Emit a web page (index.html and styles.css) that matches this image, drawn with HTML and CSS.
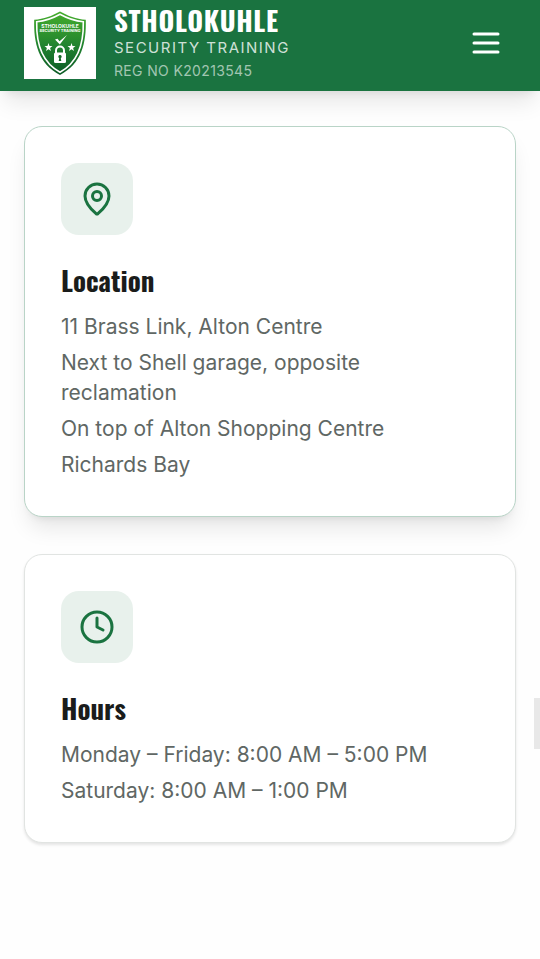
FILE: index.html
```html
<!DOCTYPE html>
<html lang="en">
<head>
  <meta charset="UTF-8" />
  <meta name="viewport" content="width=device-width, initial-scale=1.0"/>
  <title>Stholokuhle Security Training</title>
  <link rel="stylesheet" href="styles.css">
</head>
<body>

<header class="site-header">
  <a class="brand" href="#">
    <svg class="brand-logo" viewBox="0 0 72 72" aria-hidden="true">
      <defs>
        <linearGradient id="shield" x1="0" y1="0" x2="0" y2="1">
          <stop offset="0" stop-color="#45ad2c"/>
          <stop offset="0.55" stop-color="#20822f"/>
          <stop offset="1" stop-color="#0c5a26"/>
        </linearGradient>
      </defs>
      <rect width="72" height="72" fill="#fff"/>
      <path d="M36 4.500C44 9 52 12 61.800 12.800C62.500 36 57.500 57 36 68C14.500 57 9.500 36 10.200 12.800C20 12 28 9 36 4.500Z" fill="url(#shield)"/>
      <path d="M36 7.300C43.500 11.500 51 14 59.300 14.800C59.800 36 55 55 36 65.200C17 55 12.200 36 12.700 14.800C21 14 28.500 11.500 36 7.300Z" fill="none" stroke="#fff" stroke-width="1.600"/>
      <text class="logo-text logo-name" x="36" y="21" text-anchor="middle">STHOLOKUHLE</text>
      <text class="logo-text logo-sub" x="36" y="25" text-anchor="middle">SECURITY TRAINING</text>
      <path d="M31 32.500L33.500 31.800L35.500 34.300L43 28L35.800 37.500Z" fill="#fff"/>
      <path id="star" d="M24.500 36L25.500 39L28.500 39.100L26.100 41L27 44L24.500 42.200L22 44L22.900 41L20.500 39.100L23.500 39Z" fill="#fff"/>
      <use href="#star" x="23"/>
      <path d="M32 46v-2.500a4 4 0 0 1 8 0V46" fill="none" stroke="#fff" stroke-width="2"/>
      <rect x="30" y="45.500" width="12" height="10.500" rx="1.500" fill="#fff"/>
      <path d="M36 48a1.700 1.700 0 0 0-.8 3.200L34.700 54h2.600l-.5-2.800A1.700 1.700 0 0 0 36 48Z" fill="#17692a"/>
    </svg>
    <span class="brand-text">
      <span class="brand-name">STHOLOKUHLE</span>
      <span class="brand-tagline">SECURITY TRAINING</span>
      <span class="brand-reg">REG NO K20213545</span>
    </span>
  </a>
  <button class="menu-button" type="button" aria-label="Open menu">
    <svg class="icon" viewBox="0 0 24 24"><path d="M4 6h16M4 12h16M4 18h16"/></svg>
  </button>
</header>

<main class="contact-cards">
  <section class="card card-active">
    <div class="card-icon">
      <svg class="icon" viewBox="0 0 24 24">
        <path d="M20 10c0 4.993-5.539 10.193-7.399 11.799a1 1 0 0 1-1.202 0C9.539 20.193 4 14.993 4 10a8 8 0 0 1 16 0"/>
        <circle cx="12" cy="10" r="3"/>
      </svg>
    </div>
    <h3>Location</h3>
    <div class="card-lines">
      <p>11 Brass Link, Alton Centre</p>
      <p>Next to Shell garage, opposite reclamation</p>
      <p>On top of Alton Shopping Centre</p>
      <p>Richards Bay</p>
    </div>
  </section>

  <section class="card">
    <div class="card-icon">
      <svg class="icon" viewBox="0 0 24 24">
        <circle cx="12" cy="12" r="10"/>
        <path d="M12 6v6l4 2"/>
      </svg>
    </div>
    <h3>Hours</h3>
    <div class="card-lines">
      <p>Monday – Friday: 8:00 AM – 5:00 PM</p>
      <p>Saturday: 8:00 AM – 1:00 PM</p>
    </div>
  </section>
</main>

<div class="scroll-thumb"></div>

</body>
</html>
```

FILE: styles.css
```css
* {
  box-sizing: border-box;
}

body {
  margin: 0;
  min-height: 100vh;
  background: #fefefe;
  color: #1a1c1b;
  font-family: Inter, 'Liberation Sans', sans-serif;
}

.site-header {
  position: sticky;
  top: 0;
  z-index: 10;
  display: flex;
  align-items: center;
  justify-content: space-between;
  padding: 4px 24px 9px;
  background: #1a7340;
  box-shadow: 0 15px 22px -5px rgba(0, 0, 0, 0.1), 0 6px 9px -6px rgba(0, 0, 0, 0.1);
}

.brand {
  display: flex;
  align-items: center;
  gap: 18px;
  color: #fff;
  text-decoration: none;
}

.brand-logo {
  width: 72px;
  height: 72px;
  flex-shrink: 0;
}

.logo-text {
  fill: #fff;
  font-family: Inter, sans-serif;
  font-weight: 700;
}

.logo-name {
  font-size: 5px;
}

.logo-sub {
  font-size: 4px;
}

.brand-text {
  display: flex;
  flex-direction: column;
}

.brand-name,
.card h3 {
  font-family: Oswald, 'Roboto Condensed', 'Liberation Sans Narrow', Roboto, sans-serif;
  font-weight: 700;
}

.brand-name {
  font-size: 27px;
  line-height: 32px;
  letter-spacing: 0.025em;
}

.brand-tagline {
  font-size: 15px;
  line-height: 24px;
  letter-spacing: 0.1em;
  color: rgba(255, 255, 255, 0.8);
}

.brand-reg {
  font-size: 14px;
  line-height: 22px;
  letter-spacing: 0.025em;
  color: rgba(255, 255, 255, 0.6);
}

.menu-button {
  display: flex;
  padding: 12px;
  border: none;
  background: none;
  color: #fff;
  cursor: pointer;
}

.icon {
  width: 36px;
  height: 36px;
  fill: none;
  stroke: currentColor;
  stroke-width: 2;
  stroke-linecap: round;
  stroke-linejoin: round;
}

.contact-cards {
  display: grid;
  gap: 37px;
  padding: 35px 24px;
}

.card {
  padding: 36px;
  background: #fff;
  border: 1px solid #e1e4e2;
  border-radius: 18px;
  box-shadow: 0 2px 3px rgba(0, 0, 0, 0.1);
}

.card-active {
  border-color: #b9d4c7;
  box-shadow: 0 15px 22px -5px rgba(0, 0, 0, 0.1), 0 6px 9px -6px rgba(0, 0, 0, 0.1);
}

.card-icon {
  display: flex;
  align-items: center;
  justify-content: center;
  width: 72px;
  height: 72px;
  margin-bottom: 24px;
  border-radius: 18px;
  background: #e8f1ec;
  color: #1a7340;
}

.card h3 {
  margin: 0 0 11px;
  font-size: 27px;
  line-height: 42px;
}

.card-lines {
  display: grid;
  gap: 6px;
}

.card-lines p {
  margin: 0;
  color: #606764;
  font-size: 21px;
  line-height: 30px;
}

.scroll-thumb {
  position: fixed;
  right: 0;
  top: 698px;
  width: 6px;
  height: 51px;
  background: #e8e8e8;
}
```
